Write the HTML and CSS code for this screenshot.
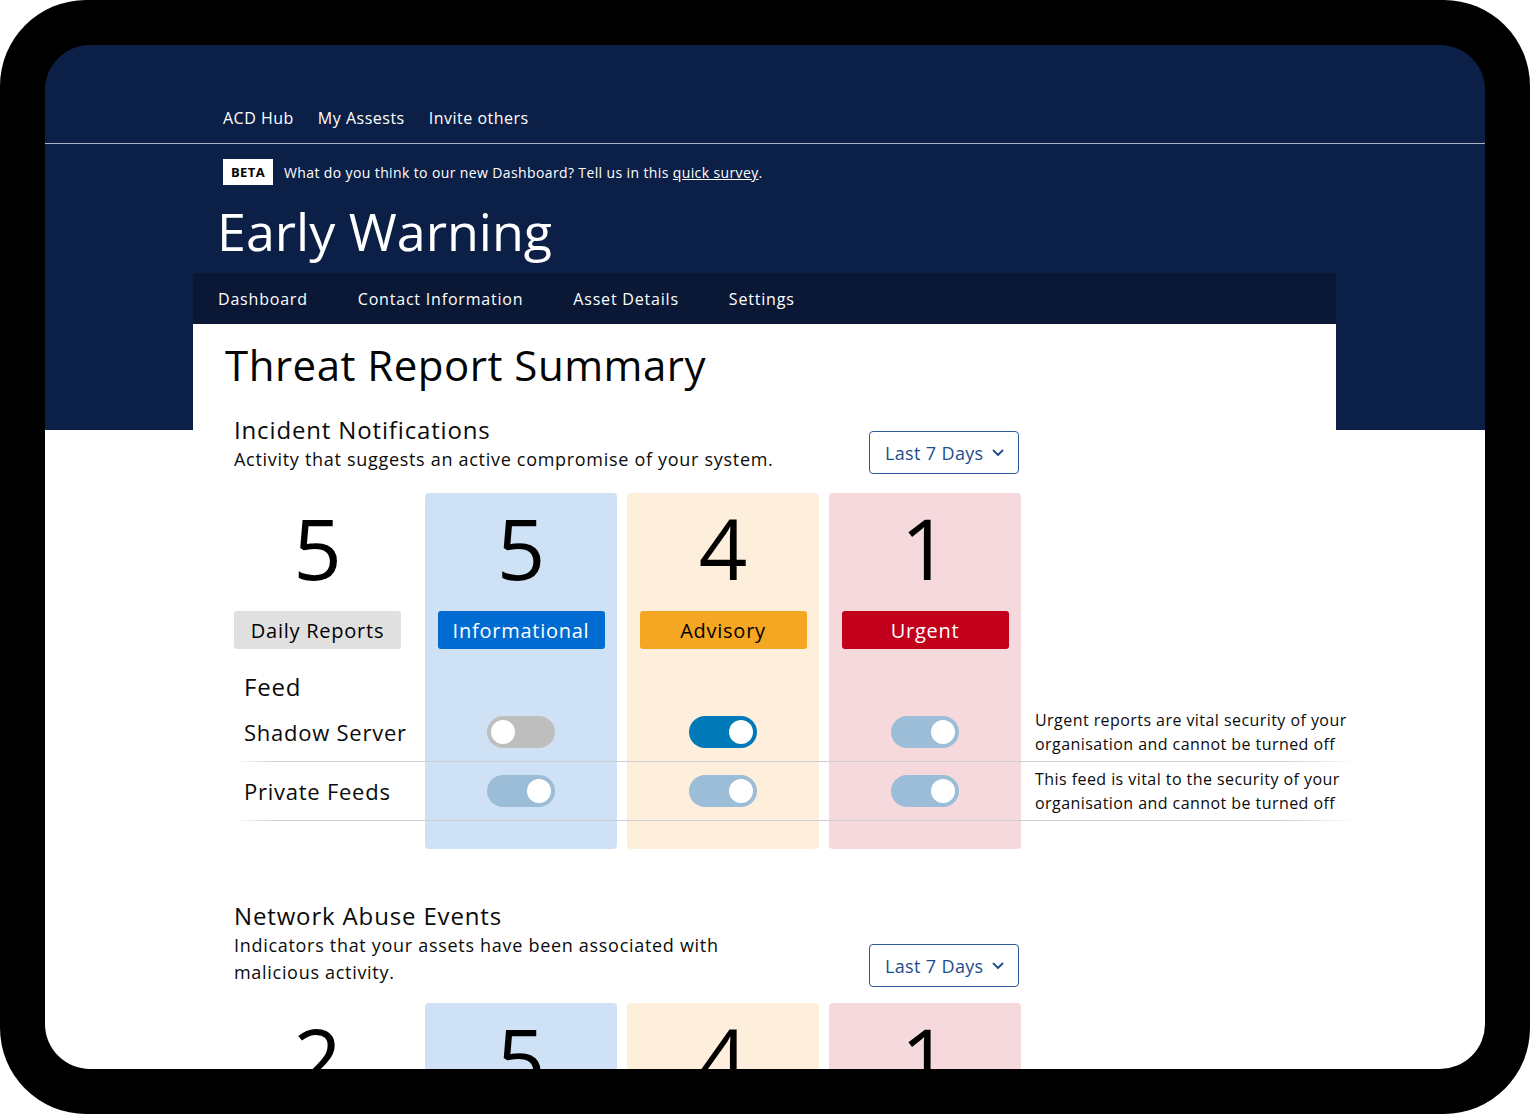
FILE: index.html
```html
<!DOCTYPE html>
<html lang="en">
<head>
<meta charset="utf-8">
<title>Early Warning</title>
<link rel="stylesheet" href="styles.css">
</head>
<body>
<div class="device">
  <div class="screen">
    <header class="masthead">
      <nav class="topnav">
        <div class="wrap topnav-links">
          <a href="#">ACD Hub</a>
          <a href="#">My Assests</a>
          <a href="#">Invite others</a>
        </div>
      </nav>
      <div class="wrap">
        <div class="beta-row">
          <span class="badge">BETA</span>
          <span class="beta-text">What do you think to our new Dashboard? Tell us in this <a href="#">quick survey</a>.</span>
        </div>
        <h1 class="title">Early Warning</h1>
      </div>
    </header>

    <main class="container">
      <nav class="tabs">
        <a href="#">Dashboard</a>
        <a href="#">Contact Information</a>
        <a href="#">Asset Details</a>
        <a href="#">Settings</a>
      </nav>

      <div class="card">
        <h2 class="page-title">Threat Report Summary</h2>

        <section class="section">
          <div class="section-head">
            <div>
              <h3 class="section-title">Incident Notifications</h3>
              <p class="section-desc">Activity that suggests an active compromise of your system.</p>
            </div>
            <button class="dropdown">Last 7 Days
              <svg width="12" height="8" viewBox="0 0 12 8"><path d="M1.5 1.5l4.5 4.5 4.5-4.5" fill="none" stroke="currentColor" stroke-width="1.8" stroke-linecap="round" stroke-linejoin="round"/></svg>
            </button>
          </div>

          <div class="grid">
            <div class="col-bg bg-info"></div>
            <div class="col-bg bg-adv"></div>
            <div class="col-bg bg-urg"></div>

            <div class="num c1">5</div>
            <div class="num c2">5</div>
            <div class="num c3">4</div>
            <div class="num c4">1</div>

            <div class="pill pill-daily c1">Daily Reports</div>
            <div class="pill pill-info c2">Informational</div>
            <div class="pill pill-adv c3">Advisory</div>
            <div class="pill pill-urg c4">Urgent</div>

            <div class="feed-head">Feed</div>

            <div class="row-line r4"></div>
            <div class="feed-name r4">Shadow Server</div>
            <div class="toggle off c2 r4"><span class="knob"></span></div>
            <div class="toggle on c3 r4"><span class="knob"></span></div>
            <div class="toggle locked c4 r4"><span class="knob"></span></div>
            <div class="note r4">Urgent reports are vital security of your organisation and cannot be turned off</div>

            <div class="row-line r5"></div>
            <div class="feed-name r5">Private Feeds</div>
            <div class="toggle locked c2 r5"><span class="knob"></span></div>
            <div class="toggle locked c3 r5"><span class="knob"></span></div>
            <div class="toggle locked c4 r5"><span class="knob"></span></div>
            <div class="note r5">This feed is vital to the security of your organisation and cannot be turned off</div>
          </div>
        </section>

        <section class="section section-2">
          <div class="section-head">
            <div>
              <h3 class="section-title">Network Abuse Events</h3>
              <p class="section-desc narrow">Indicators that your assets have been associated with malicious activity.</p>
            </div>
            <button class="dropdown">Last 7 Days
              <svg width="12" height="8" viewBox="0 0 12 8"><path d="M1.5 1.5l4.5 4.5 4.5-4.5" fill="none" stroke="currentColor" stroke-width="1.8" stroke-linecap="round" stroke-linejoin="round"/></svg>
            </button>
          </div>

          <div class="grid">
            <div class="col-bg bg-info"></div>
            <div class="col-bg bg-adv"></div>
            <div class="col-bg bg-urg"></div>

            <div class="num c1">2</div>
            <div class="num c2">5</div>
            <div class="num c3">4</div>
            <div class="num c4">1</div>

            <div class="pill pill-daily c1">Daily Reports</div>
            <div class="pill pill-info c2">Informational</div>
            <div class="pill pill-adv c3">Advisory</div>
            <div class="pill pill-urg c4">Urgent</div>
          </div>
        </section>
      </div>
    </main>
  </div>
</div>
</body>
</html>
```

FILE: styles.css
```css
* { box-sizing: border-box; }

html, body {
  margin: 0;
  padding: 0;
  background: #ffffff;
}

body {
  font-family: "Open Sans", "Noto Sans", sans-serif;
  color: #0b0b0b;
}

a { color: inherit; text-decoration: none; }

.device {
  width: 1530px;
  height: 1114px;
  background: #000;
  border-radius: 86px;
  padding: 45px;
}

.screen {
  height: 1024px;
  border-radius: 45px;
  overflow: hidden;
  background: linear-gradient(to bottom, #0c1f47 0, #0c1f47 385px, #ffffff 385px);
}

.wrap {
  width: 1143px;
  margin: 0 auto 0 148px;
  padding-left: 30px;
}

/* top navigation */
.topnav {
  height: 99px;
  border-bottom: 1px solid #aab1bf;
  padding-top: 62px;
}

.topnav-links {
  display: flex;
  gap: 24px;
  color: #ffffff;
  font-size: 16px;
  line-height: 22px;
  font-weight: 500;
  letter-spacing: 0.5px;
}

.beta-row {
  display: flex;
  align-items: center;
  gap: 11px;
  margin-top: 15px;
  color: #ffffff;
}

.badge {
  display: inline-flex;
  align-items: center;
  justify-content: center;
  width: 50px;
  height: 26px;
  background: #ffffff;
  color: #000;
  font-weight: 700;
  font-size: 13px;
  letter-spacing: 0.4px;
}

.beta-text {
  font-size: 14px;
  letter-spacing: 0.38px;
}

.beta-text a {
  text-decoration: underline;
}

.title {
  margin: 15px 0 0 -6px;
  font-size: 52px;
  line-height: 62px;
  font-weight: 500;
  color: #ffffff;
  height: 73px;
}

/* main */
.container {
  width: 1143px;
  margin: 0 auto 0 148px;
}

.tabs {
  display: flex;
  align-items: center;
  gap: 50px;
  height: 51px;
  padding-left: 25px;
  background: #0a1836;
  color: #ffffff;
  font-size: 16px;
  font-weight: 500;
  letter-spacing: 0.8px;
}

.card {
  background: #ffffff;
  padding-top: 15px;
}

.page-title {
  margin: 0;
  padding-left: 32px;
  font-size: 42px;
  line-height: 52px;
  font-weight: 500;
  letter-spacing: 0.5px;
  color: #050505;
}

.section {
  padding-left: 41px;
  margin-top: 23px;
}

.section-2 {
  margin-top: 51px;
}

.section-head {
  width: 785px;
  display: flex;
  justify-content: space-between;
  align-items: flex-end;
}

.section-title {
  margin: 0;
  font-size: 24px;
  line-height: 32px;
  font-weight: 500;
  letter-spacing: 0.85px;
}

.section-desc {
  margin: 0;
  font-size: 18px;
  line-height: 27px;
  letter-spacing: 0.7px;
}

.section-desc.narrow {
  max-width: 560px;
}

.dropdown {
  display: inline-flex;
  align-items: center;
  gap: 8px;
  width: 150px;
  height: 43px;
  padding: 0 0 0 15px;
  border: 1px solid #2b5b9b;
  border-radius: 4px;
  background: #ffffff;
  color: #1e4d8c;
  font-family: inherit;
  font-size: 18px;
  letter-spacing: 0.35px;
  margin-bottom: -1px;
}

/* grid */
.grid {
  margin-top: 20px;
  display: grid;
  grid-template-columns: 181px 192px 192px 192px 330px;
  grid-template-rows: 118px 38px 54px 59px 59px 28px;
  column-gap: 10px;
}

.section-2 .grid {
  margin-top: 17px;
}

.col-bg {
  grid-row: 1 / -1;
  border-radius: 4px;
}
.bg-info { grid-column: 2; background: #cfe2f5; }
.bg-adv  { grid-column: 3; background: #fdefdb; }
.bg-urg  { grid-column: 4; background: #f5d9dd; }

.c1 { grid-column: 1; }
.c2 { grid-column: 2; }
.c3 { grid-column: 3; }
.c4 { grid-column: 4; }
.r4 { grid-row: 4; }
.r5 { grid-row: 5; }

.num {
  grid-row: 1;
  align-self: start;
  margin-top: 11px;
  font-size: 85px;
  line-height: 86px;
  font-weight: 400;
  text-align: center;
  color: #000;
}
.num.c1 { width: 167px; }

.pill {
  grid-row: 2;
  width: 167px;
  height: 38px;
  border-radius: 3px;
  display: flex;
  align-items: center;
  justify-content: center;
  font-size: 20px;
  letter-spacing: 0.75px;
}
.pill.c1 { justify-self: start; }
.pill.c2, .pill.c3, .pill.c4 { justify-self: center; }

.pill-daily { background: #e0e0e0; color: #000; }
.pill-info  { background: #006cd1; color: #fff; }
.pill-adv   { background: #f5a623; color: #000; }
.pill-urg   { background: #c2001b; color: #fff; }

.feed-head {
  grid-row: 3;
  grid-column: 1;
  align-self: end;
  padding-left: 10px;
  margin-bottom: 4px;
  font-size: 24px;
  line-height: 24px;
  font-weight: 500;
  letter-spacing: 0.8px;
}

.feed-name {
  grid-column: 1;
  align-self: center;
  padding-left: 10px;
  padding-bottom: 1px;
  font-size: 22px;
  letter-spacing: 0.75px;
  white-space: nowrap;
}

.row-line {
  grid-column: 1 / -1;
  align-self: end;
  height: 1px;
  background: linear-gradient(to right, rgba(200,200,200,0), #cfcfcf 40px, #cfcfcf calc(100% - 80px), rgba(200,200,200,0));
}

.toggle {
  justify-self: center;
  align-self: center;
  width: 68px;
  height: 32px;
  border-radius: 16px;
  padding: 4px;
  display: flex;
  margin-bottom: 1px;
}
.toggle .knob {
  width: 24px;
  height: 24px;
  border-radius: 50%;
  background: #ffffff;
}
.toggle.off { background: #bebebe; }
.toggle.on { background: #0079b8; justify-content: flex-end; }
.toggle.locked { background: #9bbdd8; justify-content: flex-end; }

.note {
  grid-column: 5;
  align-self: center;
  padding-left: 4px;
  padding-bottom: 1px;
  font-size: 16px;
  line-height: 24px;
  letter-spacing: 0.44px;
}
```
